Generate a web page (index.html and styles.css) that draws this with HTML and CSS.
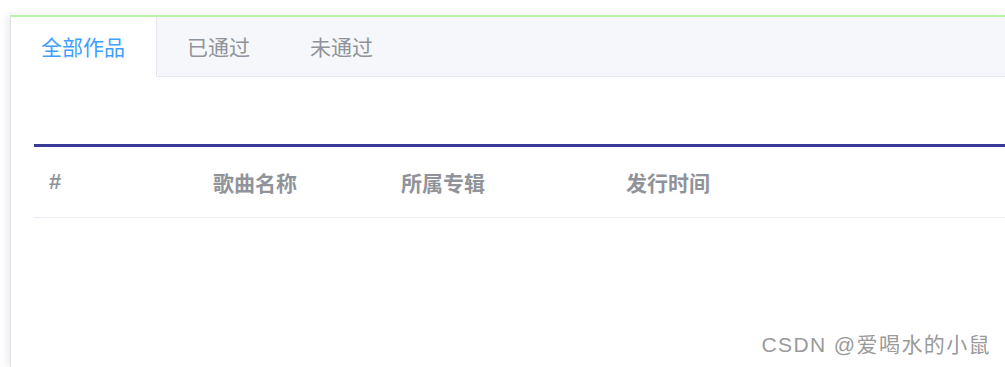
FILE: index.html
```html
<!DOCTYPE html>
<html lang="zh-CN">
  <head>
    <meta charset="UTF-8" />
    <meta name="viewport" content="width=device-width, initial-scale=1.0" />
    <title>我的作品</title>
    <link rel="stylesheet" href="styles.css">
  </head>
  <body>
    <div class="card">
      <div class="tabs">
        <div class="tab active">全部作品</div>
        <div class="tab">已通过</div>
        <div class="tab">未通过</div>
        <div class="tab-fill"></div>
      </div>

      <div class="table">
        <div class="table-head">
          <div class="cell">#</div>
          <div class="cell">歌曲名称</div>
          <div class="cell">所属专辑</div>
          <div class="cell">发行时间</div>
        </div>
      </div>
    </div>

    <div class="watermark">CSDN @爱喝水的小鼠</div>
  </body>
</html>
```

FILE: styles.css
```css
* {
  margin: 0;
  padding: 0;
  box-sizing: border-box;
  font-family: "Liberation Sans", "Noto Sans CJK SC", sans-serif;
}

body {
  background-color: #fff;
  height: 100vh;
  overflow: hidden;
  padding-top: 15px;
}

.card {
  margin-left: 10px;
  height: 352px;
  border-top: 2px solid #b9f3a8;
  border-left: 1px solid #dcdfe6;
  box-shadow: -3px 0 8px rgba(0, 0, 0, 0.08);
}

.tabs {
  display: flex;
  height: 60px;
  background-color: #f5f7fa;
}

.tab {
  padding: 1px 30px 0;
  height: 60px;
  line-height: 59px;
  font-size: 21px;
  color: #909399;
  border-bottom: 1px solid #e4e7ed;
}

.tab.active {
  background-color: #fff;
  color: #409eff;
  border-right: 1px solid #e4e7ed;
  border-bottom-color: #fff;
  padding-right: 31px;
}

.tab-fill {
  flex: 1;
  border-bottom: 1px solid #e4e7ed;
}

.table {
  margin: 67px 0 0 23px;
  border-top: 3px solid #3a3a98;
}

.table-head {
  display: grid;
  grid-template-columns: 164px 188px 225px 1fr;
  height: 71px;
  align-items: center;
  border-bottom: 1px solid #ebeef5;
}

.cell {
  padding-left: 15px;
  font-size: 21px;
  font-weight: bold;
  color: #909399;
}

.cell:first-child {
  font-size: 22px;
}

.watermark {
  position: absolute;
  right: 14px;
  bottom: 9px;
  font-size: 21px;
  letter-spacing: 1.4px;
  color: #9a9a9a;
}
```
